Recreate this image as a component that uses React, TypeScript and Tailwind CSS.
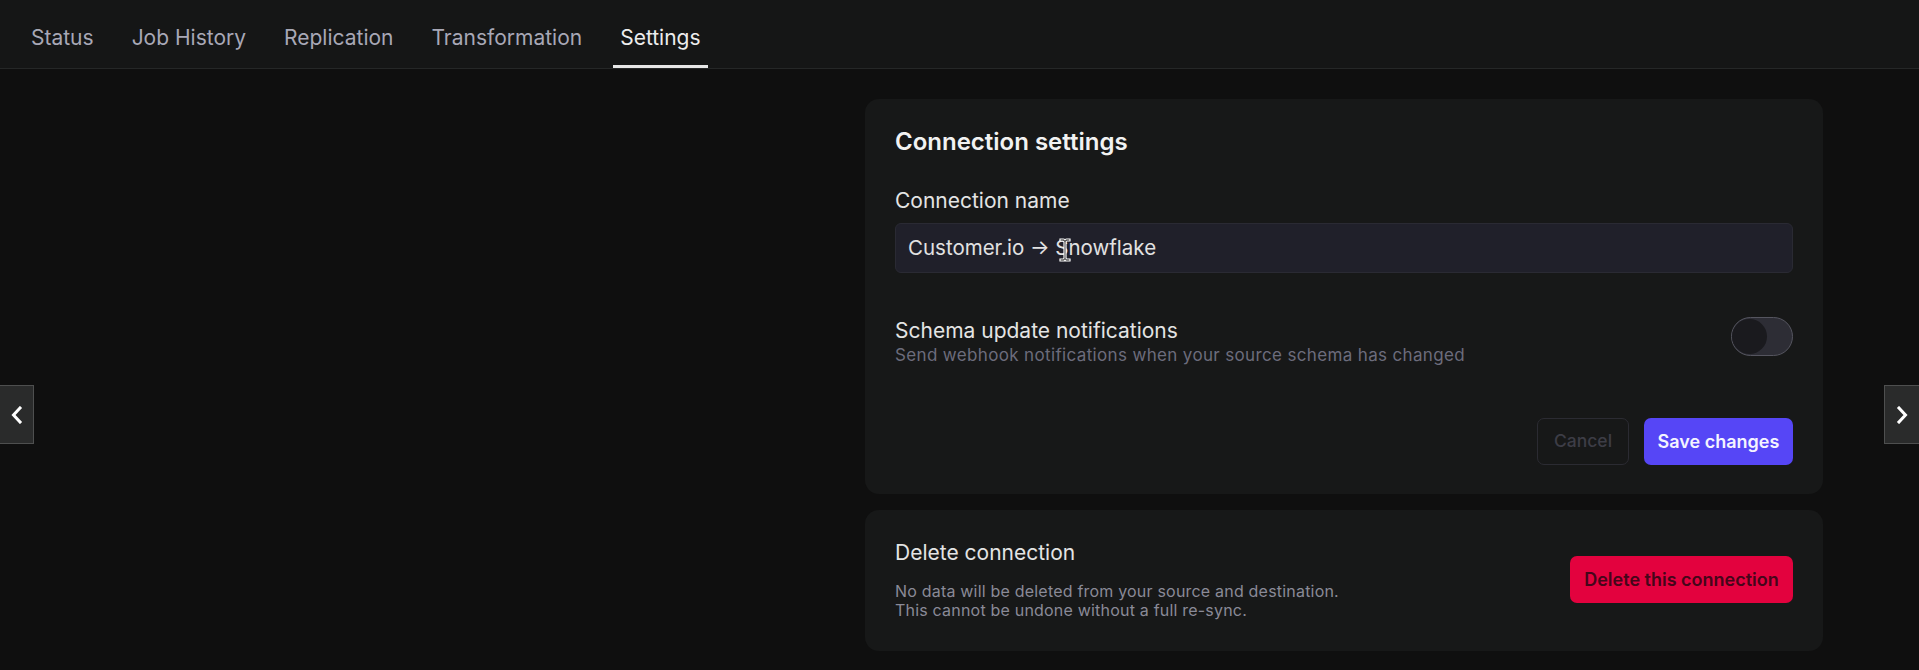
import React from "react";

function Chevron({ dir }: { dir: "left" | "right" }) {
  return (
    <svg width="14" height="18" viewBox="0 0 14 18" fill="none">
      {dir === "left" ? (
        <path d="M10 2L3.5 9L10 16" stroke="white" strokeWidth="3" strokeLinecap="square" />
      ) : (
        <path d="M4 2L10.5 9L4 16" stroke="white" strokeWidth="3" strokeLinecap="square" />
      )}
    </svg>
  );
}

function IBeam() {
  return (
    <svg width="14" height="26" viewBox="0 0 14 26" className="absolute left-[1058px] top-[237px] pointer-events-none">
      <path
        d="M2 2 H5.5 Q7 2 7 3.5 Q7 2 8.5 2 H12 V4 H9 Q8 4 8 5 V21 Q8 22 9 22 H12 V24 H8.5 Q7 24 7 22.5 Q7 24 5.5 24 H2 V22 H5 Q6 22 6 21 V5 Q6 4 5 4 H2 Z"
        fill="#111"
        stroke="white"
        strokeWidth="1.2"
      />
    </svg>
  );
}

export default function App() {
  const tabs = ["Status", "Job History", "Replication", "Transformation", "Settings"];
  return (
    <div
      className="relative min-h-[670px] h-screen w-full bg-[#0f0f0f] overflow-hidden"
      style={{ fontFamily: "Inter, 'Noto Sans', sans-serif" }}
    >
      {/* Tab bar */}
      <div className="h-[69px] bg-[#151616] border-b border-[#252727] flex items-stretch pl-[24px] gap-[24px]">
        {tabs.map((t) => {
          const active = t === "Settings";
          return (
            <div
              key={t}
              className={`px-[7px] flex items-center pt-[11px] text-[21px] border-b-[3px] ${
                active ? "text-[#ededed] border-[#e6e6e6]" : "text-[#a8a8b6] border-transparent"
              }`}
            >
              {t}
            </div>
          );
        })}
      </div>

      {/* Content */}
      <div className="flex justify-end pr-[96px] pt-[30px]">
        <div className="w-[958px] flex flex-col gap-[16px]">
          {/* Card 1 */}
          <div className="bg-[#171818] rounded-[14px] px-[30px] pt-[27px] pb-[29px] flex flex-col">
            <div className="text-[24px] leading-[32px] font-semibold text-[#f2f2f2]">Connection settings</div>
            <div className="mt-[29px] text-[21px] leading-[28px] text-[#e4e4e4]">Connection name</div>
            <div className="mt-[8px] h-[50px] rounded-[6px] bg-[#20202a] border border-[#2a2a33] flex items-center px-[12px] text-[20.5px] text-[#e2e2e2]">
              Customer.io → Snowflake
            </div>
            <div className="mt-[45px] flex items-start justify-between">
              <div className="flex flex-col">
                <div className="text-[21px] leading-[26px] text-[#e4e4e4]">Schema update notifications</div>
                <div className="text-[17px] leading-[22px] tracking-[0.35px] text-[#6c6c7c]">
                  Send webhook notifications when your source schema has changed
                </div>
              </div>
              <div className="w-[62px] h-[39px] rounded-full bg-[#2d2d35] border-[1.5px] border-[#55555f] flex items-center mt-[-1px]">
                <div className="w-[35px] h-[35px] rounded-full bg-[#1a1a1e]" />
              </div>
            </div>
            <div className="mt-[52px] flex justify-end gap-[15px]">
              <button className="h-[47px] w-[92px] rounded-[7px] border border-[#2b2b32] text-[17.5px] font-medium text-[#3d3d46]">
                Cancel
              </button>
              <button className="h-[47px] w-[149px] rounded-[7px] bg-[#5646f6] text-[18px] font-semibold text-[#f4f4ff]">
                Save changes
              </button>
            </div>
          </div>

          {/* Card 2 */}
          <div className="bg-[#171818] rounded-[14px] px-[30px] pt-[29px] pb-[31px] flex items-center justify-between">
            <div className="flex flex-col">
              <div className="text-[21px] leading-[28px] text-[#e4e4e4]">Delete connection</div>
              <div className="mt-[15px] text-[16px] leading-[19px] tracking-[0.2px] text-[#8a8a97]">
                <div>No data will be deleted from your source and destination.</div>
                <div>This cannot be undone without a full re-sync.</div>
              </div>
            </div>
            <button className="h-[47px] w-[223px] rounded-[7px] bg-[#e3023e] text-[18px] font-semibold text-[#45061a]">
              Delete this connection
            </button>
          </div>
        </div>
      </div>

      {/* Carousel arrows */}
      <button className="absolute left-0 top-[385px] w-[34px] h-[59px] bg-[#2a2b2b] border border-[#4e4f4f] border-l-0 flex items-center justify-center">
        <Chevron dir="left" />
      </button>
      <button className="absolute right-0 top-[385px] w-[35px] h-[59px] bg-[#2a2b2b] border border-[#4e4f4f] border-r-0 flex items-center justify-center">
        <Chevron dir="right" />
      </button>

      <IBeam />
    </div>
  );
}
